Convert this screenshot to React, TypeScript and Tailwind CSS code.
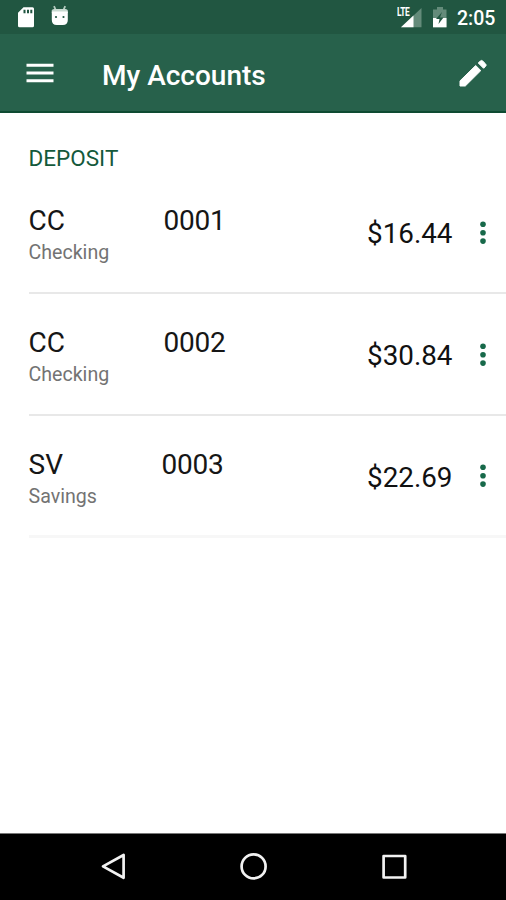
type Account = { code: string; digits: string; kind: string; balance: string; gap: string; line: string };

const accounts: Account[] = [
    { code: "CC", digits: "0001", kind: "Checking", balance: "$16.44", gap: "w-[135px]", line: "bg-[#e8e8e8] h-[2px]" },
    { code: "CC", digits: "0002", kind: "Checking", balance: "$30.84", gap: "w-[135px]", line: "bg-[#e8e8e8] h-[2px]" },
    { code: "SV", digits: "0003", kind: "Savings", balance: "$22.69", gap: "w-[133px]", line: "bg-[#f7f7f7] h-[3px]" },
];

const StatusBar = () => (
    <div className="h-[34px] shrink-0 bg-[#215641] flex items-center text-white">
        <svg className="ml-[17px]" width="18" height="34" viewBox="0 0 18 34">
            <path d="M6.500 7.300H15.500a1.500 1.500 0 0 1 1.500 1.500V25.700a1.500 1.500 0 0 1-1.500 1.500H2.500a1.500 1.500 0 0 1-1.500-1.500V12.800z" fill="#fff" />
            <path d="M6.500 9.800h2v3.500h-2zM10 9.800h2v3.500h-2zM13.300 9.800h2v3.500h-2z" fill="#215641" />
        </svg>
        <svg className="ml-[15px]" width="20" height="34" viewBox="0 0 20 34">
            <path d="M4 6.200l1.800 4M15.200 6.200l-1.800 4" stroke="#b5cabf" strokeWidth="1.800" fill="none" />
            <path d="M1.800 13V10.500Q2 9 4 9h11.500Q17.500 9 17.800 10.500V13z" fill="#c9dad1" />
            <path d="M1.800 11.500h16V20q0 5-5 5H6.800q-5 0-5-5z" fill="#fff" />
            <circle cx="6" cy="17" r="1.100" fill="#215641" />
            <circle cx="13.500" cy="17" r="1.100" fill="#215641" />
        </svg>
        <div className="flex-1" />
        <div className="relative w-[27px] h-[34px]">
            <svg width="27" height="34" viewBox="0 0 27 34">
                <path d="M25.500 8v19.300H5z" fill="#648b7a" />
                <path d="M17.500 15.500v11.800H5z" fill="#fff" />
            </svg>
            <span className="absolute left-[0.500px] top-[7px] text-[12px] leading-[11px] font-bold tracking-[-0.5px] origin-left scale-x-[0.7]">LTE</span>
        </div>
        <svg className="ml-[9px]" width="16" height="34" viewBox="0 0 16 34">
            <path d="M5 7h6v2.500h3.500V27.300H1V9.500h4z" fill="#648b7a" />
            <path d="M1 18h13.500v9.300H1z" fill="#fff" />
            <path d="M10 12l-6 7h3.500l-1 5 5-6.500H8z" fill="#215641" />
        </svg>
        <span className="ml-[9px] mr-[10px] pt-[3px] w-[39px] text-[19.500px] leading-[22px] font-medium">2:05</span>
    </div>
);

const Header = () => (
    <div className="h-[79px] shrink-0 bg-[#27614b] border-b-2 border-[#0e4b32] flex items-center pl-[26px] pr-[18px]">
        <svg width="28" height="24" viewBox="0 0 28 24">
            <path d="M.5 4.200h27M.5 12h27M.5 19.800h27" stroke="#fff" strokeWidth="3" />
        </svg>
        <h1 className="ml-[48px] pt-[6px] flex-1 text-[28px] leading-[32px] font-medium text-white">My Accounts</h1>
        <svg width="30" height="30" viewBox="0 0 30 30" fill="#fff" stroke="#fff" strokeWidth="1" strokeLinejoin="round">
            <path d="M2 22.900L17.700 7.500l5.100 5.100L7.300 28H2z" />
            <path d="M20.300 5l2-2q1.200-1.200 2.400 0l2.900 2.900q1.200 1.200 0 2.400l-2 2z" />
        </svg>
    </div>
);

const AccountRow = ({ account }: { account: Account }) => (
    <div className="h-[121.800px] ml-[28.500px] flex flex-col">
        <div className="flex-1 flex">
            <div className="pt-[33px] flex-1">
                <div className="flex text-[28px] leading-[32px] text-[#161616]">
                    <span className={account.gap}>{account.code}</span>
                    <span className="tracking-[-0.2px]">{account.digits}</span>
                </div>
                <div className="mt-[4px] text-[19.600px] leading-[24px] text-[#737373]">{account.kind}</div>
            </div>
            <div className="pt-[46px] text-[27.800px] leading-[32px] text-[#111]">{account.balance}</div>
            <svg className="mt-[48.500px] ml-[23.500px] mr-[16px]" width="14" height="24" viewBox="0 0 14 24" fill="#17694a">
                <circle cx="7" cy="3.300" r="2.800" />
                <circle cx="7" cy="11.700" r="2.800" />
                <circle cx="7" cy="20.100" r="2.800" />
            </svg>
        </div>
        <div className={account.line} />
    </div>
);

const NavBar = () => (
    <div className="h-[67px] shrink-0 bg-black border-t border-[#777] flex items-start justify-between pl-[100px] pr-[98px] pt-[17px]">
        <svg width="28" height="30" viewBox="0 0 28 30" fill="none" stroke="#f2f2f2" strokeWidth="2.700" strokeLinejoin="round">
            <path d="M23.600 4v22.800L3 15.400z" />
        </svg>
        <svg width="30" height="30" viewBox="0 0 30 30" fill="none" stroke="#f2f2f2" strokeWidth="2.700">
            <circle cx="14.600" cy="15.400" r="12" />
        </svg>
        <svg width="28" height="30" viewBox="0 0 28 30" fill="none" stroke="#f2f2f2" strokeWidth="2.700" strokeLinejoin="round">
            <path d="M3.600 5h21.600v21.500H3.600z" />
        </svg>
    </div>
);

const App = () => (
    <div className="w-full h-screen flex flex-col overflow-hidden bg-white font-[Roboto,sans-serif]">
        <StatusBar />
        <Header />
        <main className="flex-1">
            <h2 className="pt-[32px] h-[59.300px] pl-[28.500px] text-[22.500px] leading-[26px] text-[#14593b]">DEPOSIT</h2>
            {accounts.map((account) => (
                <AccountRow key={account.digits} account={account} />
            ))}
        </main>
        <NavBar />
    </div>
);

export default App;
